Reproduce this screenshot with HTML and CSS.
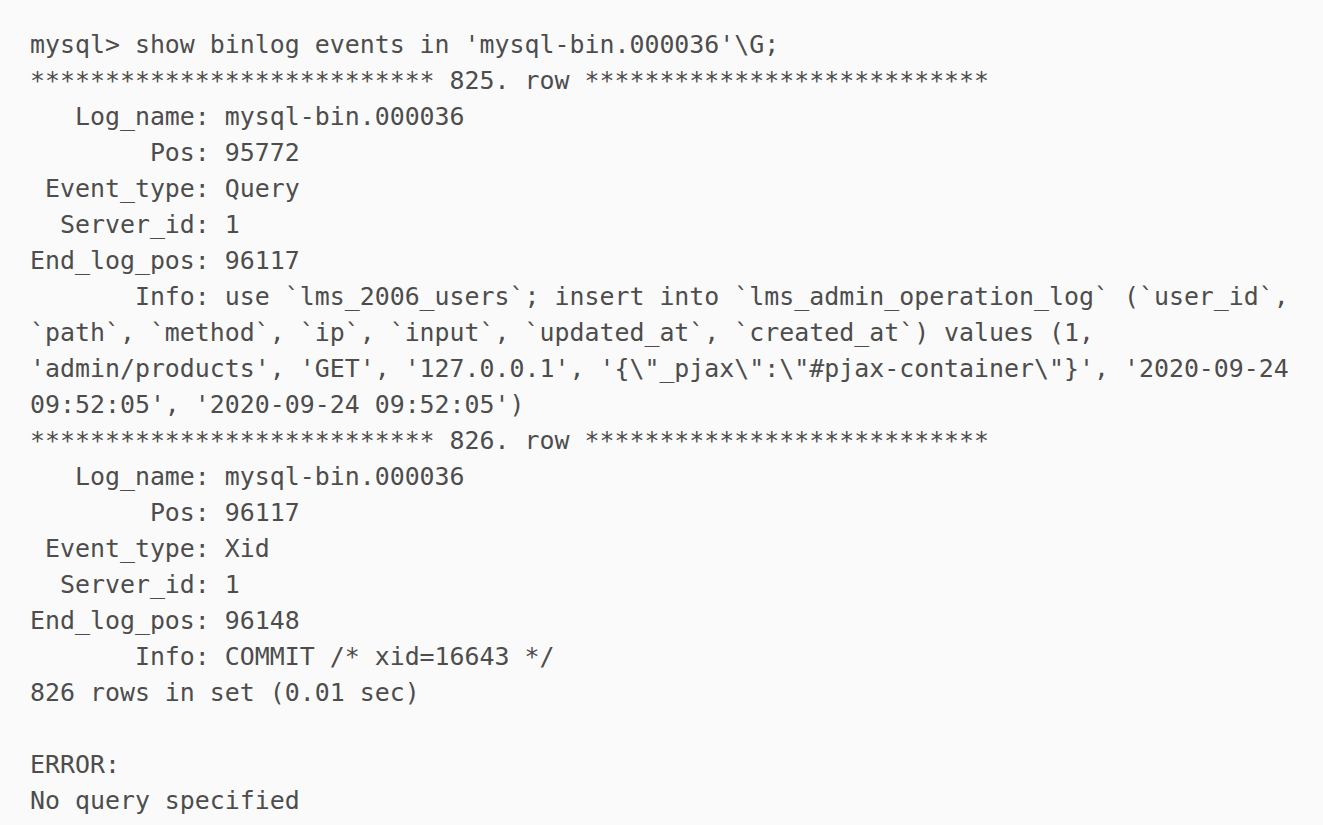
FILE: index.html
```html
<!DOCTYPE html>
<html lang="en">
<head>
<meta charset="utf-8">
<title>mysql binlog</title>
<link rel="stylesheet" href="styles.css">
</head>
<body>
<main class="code-block">
<pre class="code">mysql&gt; show binlog events in 'mysql-bin.000036'\G;
*************************** 825. row ***************************
   Log_name: mysql-bin.000036
        Pos: 95772
 Event_type: Query
  Server_id: 1
End_log_pos: 96117
       Info: use `lms_2006_users`; insert into `lms_admin_operation_log` (`user_id`,
`path`, `method`, `ip`, `input`, `updated_at`, `created_at`) values (1,
'admin/products', 'GET', '127.0.0.1', '{\"_pjax\":\"#pjax-container\"}', '2020-09-24
09:52:05', '2020-09-24 09:52:05')
*************************** 826. row ***************************
   Log_name: mysql-bin.000036
        Pos: 96117
 Event_type: Xid
  Server_id: 1
End_log_pos: 96148
       Info: COMMIT /* xid=16643 */
826 rows in set (0.01 sec)

ERROR:
No query specified</pre>
</main>
</body>
</html>
```

FILE: styles.css
```css
html, body {
  margin: 0;
  padding: 0;
  background: #fafafa;
}

.code-block {
  background: #fafafa;
  padding: 27px 30px 20px 30px;
  min-height: 825px;
  box-sizing: border-box;
}

.code {
  margin: 0;
  font-family: "DejaVu Sans Mono", "Liberation Mono", monospace;
  font-size: 24.9px;
  line-height: 36px;
  color: #4d4d4d;
  white-space: pre;
}
```
